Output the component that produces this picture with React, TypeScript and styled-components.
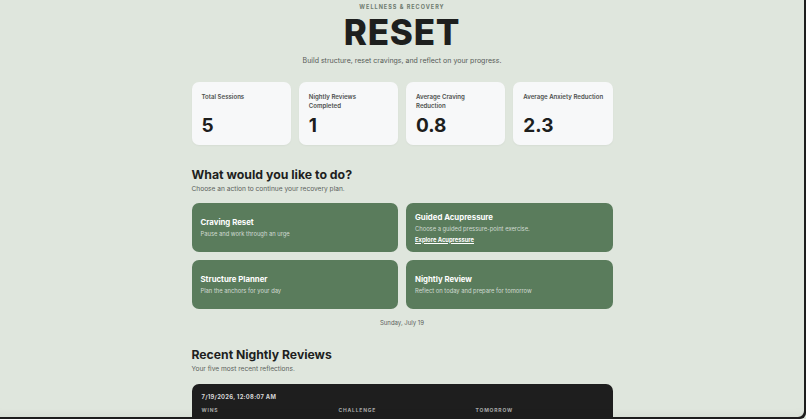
import styled, { createGlobalStyle } from 'styled-components';

const GlobalStyle = createGlobalStyle`
  html, body {
    margin: 0;
    padding: 0;
    background: #dfe6dd;
  }
  body {
    font-family: Inter, "Noto Sans", "Liberation Sans", sans-serif;
    color: #1f2120;
    -webkit-font-smoothing: antialiased;
  }
`;

// labels break where the original card wrapped them
const stats = [
  { label: 'Total Sessions', value: '5' },
  { label: 'Nightly Reviews\nCompleted', value: '1' },
  { label: 'Average Craving\nReduction', value: '0.8' },
  { label: 'Average Anxiety Reduction', value: '2.3' },
];

const actions = [
  { title: 'Craving Reset', desc: 'Pause and work through an urge' },
  { title: 'Guided Acupressure', desc: 'Choose a guided pressure-point exercise.', link: 'Explore Acupressure' },
  { title: 'Structure Planner', desc: 'Plan the anchors for your day' },
  { title: 'Nightly Review', desc: 'Reflect on today and prepare for tomorrow' },
];

const App = () => {
  return (
    <>
      <GlobalStyle />
      <Frame />
      <Page>
        <Header>
          <Eyebrow>Wellness &amp; Recovery</Eyebrow>
          <Title>RESET</Title>
          <Tagline>Build structure, reset cravings, and reflect on your progress.</Tagline>
        </Header>

        <StatGrid>
          {stats.map(s => (
            <StatCard key={s.label}>
              <StatLabel>{s.label}</StatLabel>
              <StatValue>{s.value}</StatValue>
            </StatCard>
          ))}
        </StatGrid>

        <SectionTitle>What would you like to do?</SectionTitle>
        <SectionSub>Choose an action to continue your recovery plan.</SectionSub>

        <ActionGrid>
          {actions.map(a => (
            <ActionCard key={a.title}>
              <ActionTitle>{a.title}</ActionTitle>
              <ActionDesc>{a.desc}</ActionDesc>
              {a.link && <ActionLink href="#">{a.link}</ActionLink>}
            </ActionCard>
          ))}
        </ActionGrid>

        <DateLine>Sunday, July 19</DateLine>

        <SectionTitle $second>Recent Nightly Reviews</SectionTitle>
        <SectionSub>Your five most recent reflections.</SectionSub>

        <ReviewCard>
          <ReviewDate>7/19/2026, 12:08:07 AM</ReviewDate>
          <ReviewCols>
            <ColHead>Wins</ColHead>
            <ColHead>Challenge</ColHead>
            <ColHead>Tomorrow</ColHead>
          </ReviewCols>
        </ReviewCard>
      </Page>
    </>
  );
};

export default App;

// dark window edge seen on the right and bottom of the screenshot
const Frame = styled.div`
  position: fixed;
  inset: 0;
  pointer-events: none;
  z-index: 10;
  border-bottom-right-radius: 6px;
  box-shadow: inset -2px -2px 0 #1d1d1d, inset 0 -14px 12px -12px rgba(0, 0, 0, 0.06);
`;

const Page = styled.div`
  width: 421px;
  margin: 0 auto;
  padding: 4px 0 40px;
  transform: translateX(-1px);
`;

const Header = styled.header`
  display: flex;
  flex-direction: column;
  align-items: center;
  text-align: center;
`;

const Eyebrow = styled.div`
  font-size: 5.5px;
  font-weight: 700;
  letter-spacing: 1px;
  text-transform: uppercase;
  color: #6e7b6f;
  line-height: 7px;
`;

const Title = styled.h1`
  margin: 3px 0 0;
  font-size: 35px;
  font-weight: 800;
  letter-spacing: 0.8px;
  line-height: 36px;
  color: #1e1f1e;
`;

const Tagline = styled.p`
  margin: 6px 0 0;
  font-size: 7px;
  color: #565a57;
  line-height: 10px;
`;

const StatGrid = styled.div`
  display: grid;
  grid-template-columns: repeat(4, 1fr);
  gap: 8px;
  margin-top: 16px;
`;

const StatCard = styled.div`
  background: #f7f8f9;
  border-radius: 7px;
  height: 63px;
  box-sizing: border-box;
  padding: 11px 4px 0 10px;
  display: flex;
  flex-direction: column;
  box-shadow: 0 1px 2px rgba(0, 0, 0, 0.04);
`;

const StatLabel = styled.div`
  font-size: 6.1px;
  font-weight: 600;
  color: #4d504e;
  line-height: 8.5px;
  height: 17px;
  white-space: pre-line;
`;

const StatValue = styled.div`
  margin-top: 4px;
  font-size: 19px;
  font-weight: 700;
  color: #1d1e1d;
  line-height: 24px;
`;

const SectionTitle = styled.h2<{ $second?: boolean }>`
  margin: ${p => (p.$second ? '20px' : '22px')} 0 0;
  font-size: ${p => (p.$second ? '12.2px' : '12.3px')};
  font-weight: 700;
  color: #1e1f1e;
  line-height: 16px;
`;

const SectionSub = styled.p`
  margin: 2px 0 0;
  font-size: 6.6px;
  color: #5b5f5c;
  line-height: 9px;
`;

const ActionGrid = styled.div`
  display: grid;
  grid-template-columns: 1fr 1fr;
  gap: 8px;
  margin-top: 9px;
`;

const ActionCard = styled.div`
  background: #5a7c5c;
  border-radius: 7px;
  height: 49px;
  box-sizing: border-box;
  padding: 0 9px;
  display: flex;
  flex-direction: column;
  justify-content: center;
  color: #fff;
`;

const ActionTitle = styled.div`
  font-size: 7.8px;
  font-weight: 700;
  line-height: 10px;
`;

const ActionDesc = styled.div`
  margin-top: 2px;
  font-size: 5.8px;
  color: rgba(255, 255, 255, 0.72);
  line-height: 9px;
`;

const ActionLink = styled.a`
  margin-top: 2px;
  font-size: 5.8px;
  font-weight: 700;
  color: #fff;
  line-height: 9px;
  text-decoration: underline;
  text-underline-offset: 1px;
`;

const DateLine = styled.div`
  margin-top: 9px;
  text-align: center;
  font-size: 6px;
  color: #5b5f5c;
  line-height: 9px;
`;

const ReviewCard = styled.div`
  margin-top: 10px;
  background: #1e1e1e;
  border-radius: 7px;
  padding: 8px 10px 14px;
`;

const ReviewDate = styled.div`
  font-size: 5.8px;
  font-weight: 700;
  color: #d6d6d6;
  letter-spacing: 0.3px;
  line-height: 9px;
`;

const ReviewCols = styled.div`
  display: grid;
  grid-template-columns: repeat(3, 1fr);
  gap: 10px;
  margin-top: 5px;
`;

const ColHead = styled.div`
  font-size: 5px;
  font-weight: 700;
  letter-spacing: 0.8px;
  text-transform: uppercase;
  color: #a9aaa9;
  line-height: 8px;
`;
